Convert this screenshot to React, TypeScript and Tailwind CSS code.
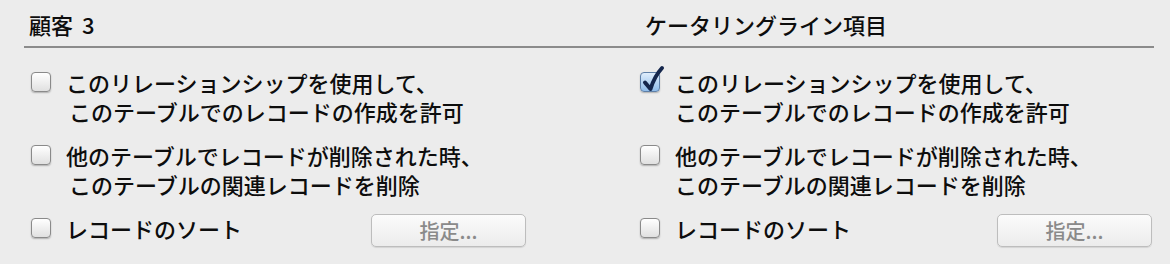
import React from "react";

const FONT = "font-['Hiragino_Kaku_Gothic_ProN','Noto_Sans_CJK_JP',sans-serif]";

function Checkbox({ checked = false }: { checked?: boolean }) {
  if (checked) {
    return (
      <div className="relative w-[20px] h-[20px] shrink-0">
        <div className="w-[20px] h-[20px] rounded-[4px] border border-[#5f80a8] bg-gradient-to-b from-[#e0eefc] to-[#8fbcea] shadow-[0_1px_1.5px_rgba(0,0,0,0.25)]" />
        <svg
          className="absolute left-0 top-[-8px]"
          width="26"
          height="30"
          viewBox="0 0 26 30"
        >
          <path
            d="M5 18.5 L10.5 25 C13 17 16.5 10 22 4"
            fill="none"
            stroke="#14264c"
            strokeWidth="4"
            strokeLinecap="round"
            strokeLinejoin="round"
          />
        </svg>
      </div>
    );
  }
  return (
    <div className="w-[20px] h-[20px] shrink-0 rounded-[4px] border border-[#8a8a8a] bg-gradient-to-b from-white to-[#e0e0e0] shadow-[0_1px_1.5px_rgba(0,0,0,0.25)]" />
  );
}

function Row({
  checked,
  lines,
  indent,
}: {
  checked?: boolean;
  lines: string[];
  indent: boolean;
}) {
  return (
    <div className="flex items-start">
      <div className="mt-[4px]">
        <Checkbox checked={checked} />
      </div>
      <div className="ml-[15px] flex flex-col">
        {lines.map((l, i) => (
          <div key={i} className={i > 0 && indent ? "pl-[3px]" : ""}>
            {l}
          </div>
        ))}
      </div>
    </div>
  );
}

function Column({
  checked,
  indent,
  padLeft,
  padRight,
  width,
}: {
  checked: boolean;
  indent: boolean;
  padLeft: string;
  padRight: string;
  width: string;
}) {
  return (
    <div className={`${width} ${padLeft} ${padRight} flex flex-col gap-[15px] pt-[20px]`}>
      <Row
        checked={checked}
        indent={indent}
        lines={["このリレーションシップを使用して、", "このテーブルでのレコードの作成を許可"]}
      />
      <Row
        indent={indent}
        lines={["他のテーブルでレコードが削除された時、", "このテーブルの関連レコードを削除"]}
      />
      <div className="flex items-start">
        <Row indent={indent} lines={["レコードのソート"]} />
        <button
          className={`ml-auto mt-[0px] w-[155px] h-[33px] rounded-[5px] border border-[#bdbdbd] bg-gradient-to-b from-[#fbfbfb] to-[#ececec] shadow-[0_1px_1px_rgba(0,0,0,0.1)] text-[#8a8a8a] text-[20px] leading-[31px] font-medium ${FONT}`}
        >
          指定...
        </button>
      </div>
    </div>
  );
}

export default function App() {
  return (
    <div className={`w-[1170px] h-[264px] bg-[#ececec] text-[#0d0d0d] text-[22px] leading-[29px] font-medium ${FONT} overflow-hidden`}>
      <div className="flex h-[46px] pt-[12px] leading-[24px]">
        <div className="w-[645px] pl-[29px]">
          顧客<span className="ml-[9px]">3</span>
        </div>
        <div>ケータリングライン項目</div>
      </div>
      <div className="ml-[24px] w-[1130px] h-[2px] bg-[#8b8b8b]" />
      <div className="flex">
        <Column checked={false} indent={true} width="w-[610px]" padLeft="pl-[31px]" padRight="pr-[84px]" />
        <Column checked={true} indent={false} width="w-[560px]" padLeft="pl-[30px]" padRight="pr-[18px]" />
      </div>
    </div>
  );
}
